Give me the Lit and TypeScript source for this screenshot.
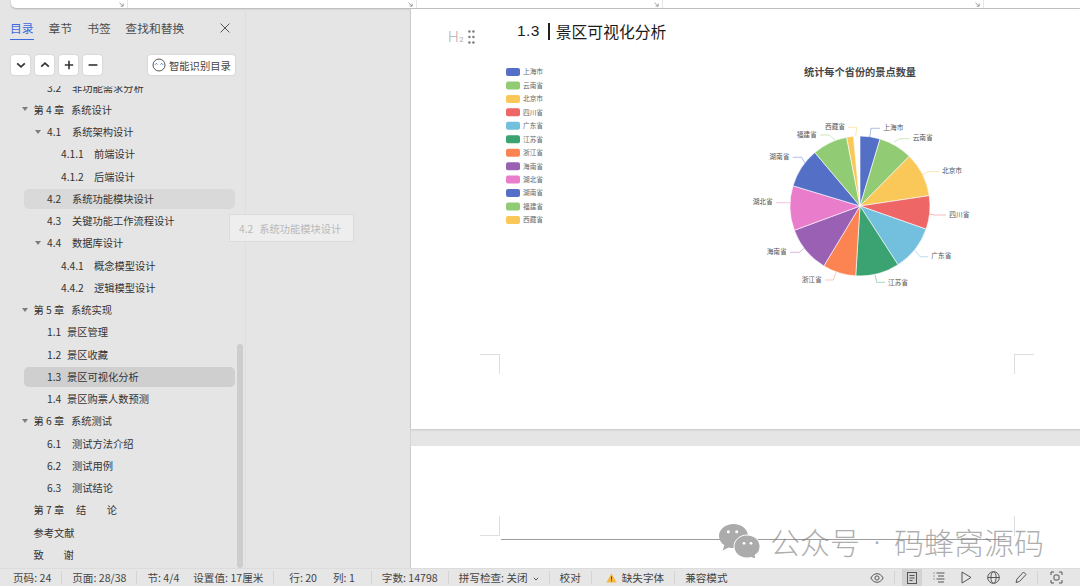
import { LitElement, html, css, svg } from "lit";
import { customElement } from "lit/decorators.js";

type Row = { lv: 1 | 2 | 3; num: string; title: string; w: number; caret?: boolean; hl?: "soft" | "strong"; extra?: string };

const rows: Row[] = [
  { lv: 2, num: "3.2", title: "非功能需求分析", w: 25 },
  { lv: 1, num: "第 4 章", title: "系统设计", w: 37.5, caret: true },
  { lv: 2, num: "4.1", title: "系统架构设计", w: 25, caret: true },
  { lv: 3, num: "4.1.1", title: "前端设计", w: 33 },
  { lv: 3, num: "4.1.2", title: "后端设计", w: 33 },
  { lv: 2, num: "4.2", title: "系统功能模块设计", w: 25, hl: "soft" },
  { lv: 2, num: "4.3", title: "关键功能工作流程设计", w: 25 },
  { lv: 2, num: "4.4", title: "数据库设计", w: 25, caret: true },
  { lv: 3, num: "4.4.1", title: "概念模型设计", w: 33 },
  { lv: 3, num: "4.4.2", title: "逻辑模型设计", w: 33 },
  { lv: 1, num: "第 5 章", title: "系统实现", w: 37.5, caret: true },
  { lv: 2, num: "1.1", title: "景区管理", w: 20 },
  { lv: 2, num: "1.2", title: "景区收藏", w: 20 },
  { lv: 2, num: "1.3", title: "景区可视化分析", w: 20, hl: "strong" },
  { lv: 2, num: "1.4", title: "景区购票人数预测", w: 20 },
  { lv: 1, num: "第 6 章", title: "系统测试", w: 37.5, caret: true },
  { lv: 2, num: "6.1", title: "测试方法介绍", w: 25 },
  { lv: 2, num: "6.2", title: "测试用例", w: 25 },
  { lv: 2, num: "6.3", title: "测试结论", w: 25 },
  { lv: 1, num: "第 7 章", title: "结", w: 42.5, extra: "论" },
  { lv: 1, num: "", title: "参考文献", w: 0 },
  { lv: 1, num: "致", title: "谢", w: 30 },
];

const slices = [
  { name: "上海市", color: "#5470c6", end: 16.7, line: "389,262 393,235 420,235", tx: 430, ty: 232 },
  { name: "云南省", color: "#91cc75", end: 44.8, line: "462,276 480,266 508,266", tx: 518, ty: 264 },
  { name: "北京市", color: "#fac858", end: 81.5, line: "543,376 565,365 597,365", tx: 606, ty: 363 },
  { name: "四川省", color: "#ee6666", end: 109.3, line: "568,492 585,495 618,495", tx: 628, ty: 494 },
  { name: "广东省", color: "#73c0de", end: 147.1, line: "525,601 540,620 565,620", tx: 574, ty: 618 },
  { name: "江苏省", color: "#3ba272", end: 183.5, line: "405,674 410,697 435,697", tx: 444, ty: 697 },
  { name: "浙江省", color: "#fc8452", end: 211.1, line: "288,667 280,690 255,690", tx: 185, ty: 689 },
  { name: "海南省", color: "#9a60b4", end: 249.7, line: "198,590 178,607 150,607", tx: 80, ty: 606 },
  { name: "湖北省", color: "#ea7ccc", end: 286.8, line: "150,458 130,458 108,458", tx: 38, ty: 456 },
  { name: "湖南省", color: "#5470c6", end: 319.8, line: "195,340 185,322 158,322", tx: 88, ty: 319 },
  { name: "福建省", color: "#91cc75", end: 349, line: "285,270 268,255 240,255", tx: 170, ty: 254 },
  { name: "西藏省", color: "#fac858", end: 354.6, line: "347,258 350,232 325,232", tx: 255, ty: 231 },
];

const CX = 860, CY = 206, R = 70;
const pt = (deg: number, r = R) => {
  const a = (deg * Math.PI) / 180;
  return `${(CX + r * Math.sin(a)).toFixed(2)} ${(CY - r * Math.cos(a)).toFixed(2)}`;
};
const toReal = (p: string) =>
  p.split(" ").map((c) => {
    const [x, y] = c.split(",").map(Number);
    return `${(x / 3 + 740).toFixed(1)},${(y / 3 + 50).toFixed(1)}`;
  }).join(" ");

@customElement("app-root")
export class AppRoot extends LitElement {
  static styles = css`
    :host { display: block; width: 1080px; height: 586px; font-family: "Noto Sans CJK SC", "Noto Sans", sans-serif; color: #3a3a3a; background: #e5e5e5; overflow: hidden; position: relative; }
    .app { display: grid; grid-template-rows: 9px 1fr 18px; height: 586px; }

    .ruler-wrap { padding-left: 11px; }
    .ruler { display: flex; height: 8px; background: #fff; border-radius: 0 0 0 5px; box-shadow: 0 1px 2px rgba(0,0,0,.22); overflow: hidden; }
    .seg { position: relative; border-right: 1px solid #e6e6e6; flex: none; }
    .seg.a { width: 116px; } .seg.b { width: 288px; } .seg.c { width: 245px; } .seg.d { width: 320px; }
    .seg svg { position: absolute; right: 3px; bottom: 1px; }

    .main { display: flex; min-height: 0; }
    .side { width: 245px; flex: none; border-right: 1px solid #dedede; display: flex; flex-direction: column; position: relative; min-height: 0; }
    .gutter { width: 164px; flex: none; position: relative; }

    .tabs { display: flex; align-items: flex-start; height: 31px; padding: 8px 0 0 10px; box-sizing: border-box; font-size: 11.8px; color: #4d4d4d; position: relative; }
    .tab { height: 22.5px; line-height: 22px; margin-right: 15px; box-sizing: border-box; white-space: nowrap; }
    .tab.on { color: #3d68e0; border-bottom: 1.5px solid #3d68e0; }
    .tab.t3 { margin-left: -.5px; margin-right: 0; }
    .close { position: absolute; right: 15px; top: 14px; width: 10px; height: 10px; display: block; }

    .tools { display: flex; align-items: center; height: 20px; margin-top: 15px; padding: 0 10px 0 11px; gap: 5px; }
    .btn { width: 19px; height: 20px; background: #fff; border-radius: 3px; box-shadow: 0 0 2px rgba(0,0,0,.18); display: flex; align-items: center; justify-content: center; }
    .smart { margin-left: auto; width: 87px; height: 20px; background: #fff; border-radius: 3px; box-shadow: 0 0 2px rgba(0,0,0,.18); display: flex; align-items: center; padding-left: 4px; box-sizing: border-box; gap: 3px; font-size: 10.3px; color: #444; white-space: nowrap; }

    .list { flex: 1; margin-top: 11px; overflow: hidden; min-height: 0; }
    .list-in { margin-top: -10px; }
    .row { height: 22.25px; display: flex; align-items: center; position: relative; font-size: 10.25px; color: #333; white-space: nowrap; }
    .row.lv1 { padding-left: 21.5px; } .row.lv2 { padding-left: 35px; } .row.lv3 { padding-left: 49px; }
    .row.soft::before, .row.strong::before { content: ""; position: absolute; left: 24px; width: 211px; top: 1.5px; bottom: .5px; border-radius: 5px; }
    .row.soft::before { background: #d9d9d9; }
    .row.strong::before { background: #cfcfcf; }
    .caret { width: 12px; flex: none; position: relative; height: 10px; }
    .caret.show::after { content: ""; position: absolute; left: 0; top: 3px; border-left: 3px solid transparent; border-right: 3px solid transparent; border-top: 4.5px solid #7d7d7d; }
    .num, .ttl { position: relative; flex: none; }
    .num { display: inline-block; }
    .gap { margin-left: 20.5px; }
    .scroll { position: absolute; left: 237px; top: 335px; bottom: 0; width: 6px; border-radius: 3px; background: #cdcdcd; }

    .tip { position: absolute; left: 229px; top: 214px; width: 125px; height: 28px; box-sizing: border-box; background: rgba(240,240,240,.8); border: 1px solid #dcdcdc; display: flex; align-items: center; padding-left: 9px; font-size: 10.25px; color: #b9b9b9; white-space: nowrap; }
    .tip span { margin-left: 6px; }

    .doc { flex: 1; min-width: 0; display: flex; flex-direction: column; gap: 17px; border-left: 1px solid #d4d4d4; }
    .page { background: #fff; position: relative; box-shadow: 0 1px 2px rgba(0,0,0,.14); }
    .page.p1 { height: 420px; flex: none; }
    .page.p2 { flex: 1; }
    .head { display: flex; align-items: center; height: 20px; padding: 12px 0 0 37px; }
    .h2 { font-family: "Roboto", sans-serif; font-weight: 300; font-size: 15px; color: #b0b0b0; width: 19.5px; line-height: 20px; margin-top: 15px; flex: none; }
    .h2 small { font-size: 7.5px; font-weight: 400; color: #aaa; margin-left: .5px; }
    .dots { width: 49.5px; flex: none; margin-top: 11px; }
    .dots svg { display: block; }
    .hnum { font-family: "Liberation Sans", Arial, sans-serif; font-size: 15.5px; color: #1c1c1c; letter-spacing: .4px; }
    .hbar { width: 2px; height: 17px; background: #222; margin: 0 5.5px 0 8.5px; }
    .htxt { font-size: 15.8px; color: #1c1c1c; white-space: nowrap; }
    .chart { display: block; margin: 19px 0 0 89px; }

    .crop { position: absolute; width: 20px; height: 20px; border: 0 solid #dedede; box-sizing: border-box; }
    .crop.bl { left: 69px; top: 345px; border-top-width: 1px; border-right-width: 1px; }
    .crop.br { left: 603px; top: 345px; border-top-width: 1px; border-left-width: 1px; }
    .crop.tl { left: 69px; top: 70px; border-bottom-width: 1px; border-right-width: 1px; }
    .crop.tr { left: 603px; top: 70px; border-left-width: 1px; }
    .rule { position: absolute; left: 90px; width: 505px; top: 93px; height: 1px; background: #9c9c9c; }

    .mark { position: absolute; left: 718px; top: 524px; display: flex; align-items: center; color: rgba(120,120,120,.6); font-size: 30px; white-space: nowrap; line-height: 34px; height: 34px; font-weight: 300; }
    .mark svg { margin-right: 10px; flex: none; }
    .mark .dot { width: 34px; text-align: center; flex: none; font-family: "Liberation Sans", sans-serif; font-size: 24px; }

    .status { display: flex; align-items: center; background: #e6e6e6; border-top: 1px solid #dcdcdc; box-sizing: border-box; font-size: 10.6px; color: #444; padding-left: 13px; white-space: nowrap; position: relative; }
    .i { flex: none; }
    .sep { width: 1px; height: 13px; background: #d4d4d4; margin: 0 10px; flex: none; }
    .m14 { margin-left: 14px; } .m16 { margin-left: 16px; }
    .sep.w { margin-right: 15px; }
    .sep.x { margin-left: 16px; }
    .caret2 { display: inline-block; margin-left: 5px; vertical-align: 1px; }
    .warn { margin: 0 5px 0 4px; flex: none; display: block; }
    .icons { margin-left: auto; display: flex; align-items: center; height: 17px; padding-right: 14px; }
    .ic { width: 20px; height: 17px; display: flex; align-items: center; justify-content: center; flex: none; }
    .ic.on { background: #d3d3d3; }
    .ic.s { margin-left: 7.3px; }
    .vs { width: 1px; height: 13px; background: #d4d4d4; flex: none; }
    .vs.a { margin: 0 7px; }
    .vs.b { margin: 0 1px 0 6px; }
    .ic svg { fill: none; stroke: #555; stroke-width: 1; }
  `;

  private row(r: Row) {
    return html`<div class="row lv${r.lv} ${r.hl ?? ""}">
      <span class="caret ${r.caret ? "show" : ""}"></span>
      <span class="num" style="width:${r.w}px">${r.num}</span>
      <span class="ttl">${r.title}</span>
      ${r.extra ? html`<span class="ttl gap">${r.extra}</span>` : ""}
    </div>`;
  }

  private chart() {
    let start = 0;
    const wedges = slices.map((s) => {
      const large = s.end - start > 180 ? 1 : 0;
      const d = `M${CX} ${CY}L${pt(start)}A${R} ${R} 0 ${large} 1 ${pt(s.end)}Z`;
      start = s.end;
      return svg`<path d=${d} fill=${s.color} stroke="#fff" stroke-width=".6"></path>`;
    });
    const legend = slices.map((s, i) => {
      const y = 72 + i * 13.45;
      return svg`<rect x="506" y=${y - 4} width="14" height="8" rx="2" fill=${s.color}></rect>
        <text x="523" y=${y + 2.4} font-size="6.7" fill="#666">${s.name}</text>`;
    });
    const labels = slices.map((s) => svg`
      <polyline points=${toReal(s.line)} fill="none" stroke=${s.color} stroke-opacity=".65" stroke-width=".7"></polyline>
      <text x=${s.tx / 3 + 740} y=${s.ty / 3 + 50 + 2.4} font-size="6.7" fill="#555">${s.name}</text>`);
    return html`<svg class="chart" width="500" height="240" viewBox="500 60 500 240" font-family="Noto Sans CJK SC, sans-serif">
      ${legend}
      <text x="860" y="76" text-anchor="middle" font-size="10.2" font-weight="700" fill="#464646">统计每个省份的景点数量</text>
      ${wedges}${labels}
    </svg>`;
  }

  render() {
    const arrow = html`<svg width="5" height="5" viewBox="0 0 5 5"><path d="M0.5 .8 L4 4 M4.2 1.6 V4.2 H1.6" stroke="#8a8a8a" stroke-width=".8" fill="none"/></svg>`;
    return html`<div class="app">
      <div class="ruler-wrap"><div class="ruler">
        <div class="seg a">${arrow}</div><div class="seg b">${arrow}</div><div class="seg c">${arrow}</div><div class="seg d">${arrow}</div>
      </div></div>

      <div class="main">
        <aside class="side">
          <div class="tabs">
            <div class="tab on">目录</div><div class="tab">章节</div><div class="tab">书签</div><div class="tab t3">查找和替换</div>
            <svg class="close" viewBox="0 0 10 10"><path d="M.6.6l8.8 8.8M9.4.6L.6 9.4" stroke="#555" stroke-width="1" fill="none"/></svg>
          </div>
          <div class="tools">
            <div class="btn"><svg width="10" height="10" viewBox="0 0 10 10"><path d="M1.2 3.4L5 6.9l3.8-3.5" fill="none" stroke="#333" stroke-width="1.7"/></svg></div>
            <div class="btn"><svg width="10" height="10" viewBox="0 0 10 10"><path d="M1.2 6.6L5 3.1l3.8 3.5" fill="none" stroke="#333" stroke-width="1.7"/></svg></div>
            <div class="btn"><svg width="10" height="10" viewBox="0 0 10 10"><path d="M.8 5h8.4M5 .8v8.4" fill="none" stroke="#333" stroke-width="1.6"/></svg></div>
            <div class="btn"><svg width="10" height="10" viewBox="0 0 10 10"><path d="M.6 5h8.8" fill="none" stroke="#333" stroke-width="1.6"/></svg></div>
            <div class="smart">
              <svg width="14" height="14" viewBox="0 0 14 14"><circle cx="7" cy="7" r="6" fill="none" stroke="#555" stroke-width="1"/><path d="M2.9 6.8L4.4 5.3 5.4 6.5M8.6 6.5L9.6 5.3 11.1 6.8" fill="none" stroke="#4a78e0" stroke-width="1"/></svg>
              智能识别目录
            </div>
          </div>
          <div class="list"><div class="list-in">${rows.map((r) => this.row(r))}</div></div>
          <div class="scroll"></div>
        </aside>
        <div class="gutter"></div>
        <section class="doc">
          <div class="page p1">
            <div class="head">
              <div class="h2">H<small>2</small></div>
              <div class="dots"><svg width="7" height="14" viewBox="0 0 7 14" fill="#808080"><circle cx="1.4" cy="1.5" r="1.3"/><circle cx="5.4" cy="1.5" r="1.3"/><circle cx="1.4" cy="7" r="1.3"/><circle cx="5.4" cy="7" r="1.3"/><circle cx="1.4" cy="12.5" r="1.3"/><circle cx="5.4" cy="12.5" r="1.3"/></svg></div>
              <span class="hnum">1.3</span><span class="hbar"></span><span class="htxt">景区可视化分析</span>
            </div>
            ${this.chart()}
            <div class="crop bl"></div><div class="crop br"></div>
          </div>
          <div class="page p2">
            <div class="crop tl"></div><div class="crop tr"></div><div class="rule"></div>
          </div>
        </section>
      </div>

      <footer class="status">
        <span class="i">页码: 24</span><span class="sep"></span>
        <span class="i">页面: 28/38</span><span class="sep"></span>
        <span class="i">节: 4/4</span>
        <span class="i m14">设置值: 17厘米</span><span class="sep w"></span>
        <span class="i">行: 20</span>
        <span class="i m16">列: 1</span><span class="sep x"></span>
        <span class="i">字数: 14798</span><span class="sep"></span>
        <span class="i">拼写检查: 关闭<svg class="caret2" width="6" height="4" viewBox="0 0 6 4"><path d="M.8.8L3 3l2.2-2.2" fill="none" stroke="#555" stroke-width="1"/></svg></span><span class="sep"></span>
        <span class="i">校对</span><span class="sep"></span>
        <svg class="warn" width="11" height="10" viewBox="0 0 11 10"><path d="M5.5.5L10.7 9.6H.3z" fill="#f5b942"/><path d="M5.5 3.4v3.2M5.5 7.4v1" stroke="#5c4300" stroke-width="1"/></svg>
        <span class="i">缺失字体</span><span class="sep"></span>
        <span class="i">兼容模式</span>
        <div class="icons">
          <div class="ic"><svg width="14" height="10" viewBox="0 0 14 10"><path d="M.8 5C2.5 2 4.6.7 7 .7S11.5 2 13.2 5C11.5 8 9.4 9.3 7 9.3S2.5 8 .8 5z"/><circle cx="7" cy="5" r="2.1"/></svg></div>
          <div class="vs a"></div>
          <div class="ic on"><svg width="10" height="12" viewBox="0 0 10 12"><rect x=".5" y=".5" width="9" height="11"/><path d="M2.5 3.5h5M2.5 6h5M2.5 8.5h3"/></svg></div>
          <div class="ic s"><svg width="12" height="12" viewBox="0 0 12 12"><path d="M3.5 1h8M5 4h6M3.5 7h8M5 10h6M.5 1h1M.5 4h1M.5 7h1"/></svg></div>
          <div class="ic s"><svg width="11" height="13" viewBox="0 0 11 13"><path d="M1 1l9 5.500-9 5.500z"/></svg></div>
          <div class="ic s"><svg width="13" height="13" viewBox="0 0 13 13"><circle cx="6.5" cy="6.5" r="5.8"/><ellipse cx="6.5" cy="6.5" rx="2.6" ry="5.8"/><path d="M.7 6.500h11.600"/></svg></div>
          <div class="ic s"><svg width="12" height="13" viewBox="0 0 12 13"><path d="M8.5 1l2.500 2.500-6.500 7-3.500 1 1-3.500z"/></svg></div>
          <div class="vs b"></div>
          <div class="ic s"><svg width="13" height="13" viewBox="0 0 13 13"><path d="M1 4V1h3M9 1h3v3M12 9v3H9M4 12H1V9"/><rect x="4" y="4" width="5" height="5" rx="1"/></svg></div>
        </div>
      </footer>
    </div>

    <div class="tip">4.2<span>系统功能模块设计</span></div>
    <div class="mark">
      <svg width="42" height="34" viewBox="0 0 42 34">
        <path d="M15.5 0C7.5 0 1 5.4 1 12c0 3.8 2.1 7.1 5.4 9.300L4.600 26.500l6-3.100c1.600.4 3.200.6 4.900.6 8 0 14.500-5.400 14.500-12S23.500 0 15.500 0z" fill="#ababab"/>
        <path d="M42 22.500C42 16.100 36.200 11 29 11s-13 5.100-13 11.500S21.800 34 29 34c1.500 0 2.900-.2 4.200-.6l4.800 2-1-4.300c3.600-2 5-5 5-8.600z" fill="#ababab" stroke="#fff" stroke-width="1"/>
        <circle cx="10.3" cy="7.7" r="1.5" fill="#fff"/><circle cx="18.7" cy="7.7" r="1.5" fill="#fff"/>
        <circle cx="26" cy="19.3" r="1.4" fill="#fff"/><circle cx="33" cy="19.3" r="1.4" fill="#fff"/>
      </svg>
      <span>公众号</span><span class="dot">·</span><span>码蜂窝源码</span>
    </div>`;
  }
}
